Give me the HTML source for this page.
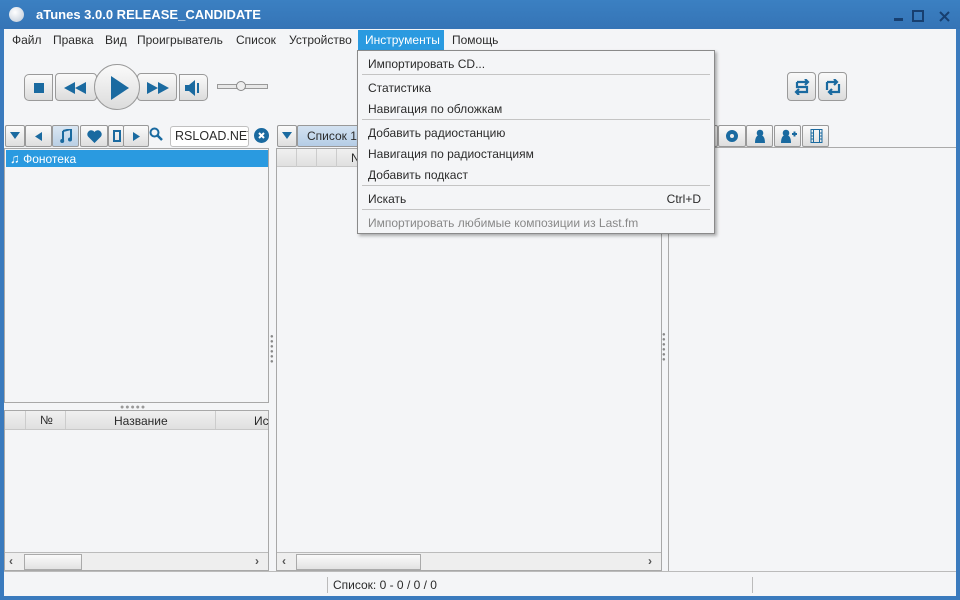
<!DOCTYPE html>
<html><head><meta charset="utf-8"><style>
*{box-sizing:border-box;margin:0;padding:0}
body{width:960px;height:600px;overflow:hidden;background:#3a7abd;font-family:"Liberation Sans","DejaVu Sans",sans-serif;font-size:12px;color:#2b2b2b;position:relative}
.a{position:absolute}
.btn{position:absolute;border:1px solid #9a9a9a;border-radius:4px;background:linear-gradient(#fafafa,#dcdcdc)}
.panel{position:absolute;background:#f4f5f7;border:1px solid #a8a8a8}
.mi{position:absolute;left:10px;font-size:12px}
.sep{position:absolute;left:4px;right:4px;height:1px;background:#c4c4c4}
.tb{position:absolute;top:125px;height:22px;border:1px solid #999;border-radius:2px;background:linear-gradient(#fbfbfb,#dedede)}
svg{display:block}
</style></head><body>
<div class="a" style="left:0;top:0;width:960px;height:29px;background:linear-gradient(#3b80c2,#3574b6)"></div>
<div class="a" style="left:9px;top:7px;width:15px;height:15px;border-radius:50%;background:radial-gradient(circle at 40% 35%,#fff,#bcc8d6)"></div>
<div class="a" style="left:36px;top:7px;color:#fff;font-weight:bold;font-size:13px">aTunes 3.0.0 RELEASE_CANDIDATE</div>
<div class="a" style="left:894px;top:18px;width:9px;height:3px;background:#173f70"></div>
<div class="a" style="left:912px;top:10px;width:12px;height:12px;border:2px solid #173f70"></div>
<svg class="a" style="left:939px;top:11px" width="11" height="11"><path d="M1 1L10 10M10 1L1 10" stroke="#173f70" stroke-width="2"/></svg>
<div class="a" style="left:4px;top:29px;width:952px;height:567px;background:#f4f5f7"></div>
<div class="a" style="left:358px;top:30px;width:86px;height:20px;background:#2a9ae0"></div>
<div class="a" style="top:33px;left:12px">
<span class="a" style="left:0">Файл</span><span class="a" style="left:41px">Правка</span><span class="a" style="left:93px">Вид</span><span class="a" style="left:125px;white-space:nowrap">Проигрыватель</span><span class="a" style="left:224px">Список</span><span class="a" style="left:277px">Устройство</span><span class="a" style="left:353px;color:#fff;white-space:nowrap">Инструменты</span><span class="a" style="left:440px">Помощь</span></div>
<div class="btn" style="left:24px;top:74px;width:29px;height:27px;border-radius:5px 0 0 5px"><div class="a" style="left:9px;top:8px;width:10px;height:10px;background:#1a6aa0"></div></div>
<div class="btn" style="left:55px;top:73px;width:42px;height:28px"><svg class="a" style="left:8px;top:8px" width="24" height="12"><path d="M0 6L11 0V12ZM11 6L22 0V12Z" fill="#1a6aa0"/></svg></div>
<div class="btn" style="left:137px;top:73px;width:40px;height:28px"><svg class="a" style="left:9px;top:8px" width="24" height="12"><path d="M0 0L11 6L0 12ZM11 0L22 6L11 12Z" fill="#1a6aa0"/></svg></div>
<div class="btn" style="left:94px;top:64px;width:46px;height:46px;border-radius:50%"><svg class="a" style="left:15px;top:11px" width="20" height="24"><path d="M1 0L19 12L1 24Z" fill="#1a6aa0"/></svg></div>
<div class="btn" style="left:179px;top:74px;width:29px;height:27px;border-radius:0 5px 5px 0"><svg class="a" style="left:5px;top:5px" width="18" height="16"><path d="M0 5H4L10 0V16L4 11H0Z M12 3h2v10h-2z" fill="#1a6aa0"/></svg></div>
<div class="a" style="left:217px;top:84px;width:51px;height:5px;border:1px solid #999;background:#e8e8e8"></div>
<div class="a" style="left:236px;top:81px;width:10px;height:10px;border-radius:50%;border:1px solid #888;background:#eee"></div>
<div class="btn" style="left:787px;top:72px;width:29px;height:29px"><svg class="a" style="left:6px;top:6px" width="16" height="16"><path d="M3 3H14M11 0L14 3L11 6M3 3V8H13V13H2M5 10L2 13L5 16" stroke="#1a6aa0" stroke-width="2.2" fill="none"/></svg></div>
<div class="btn" style="left:818px;top:72px;width:29px;height:29px"><svg class="a" style="left:6px;top:6px" width="16" height="16"><path d="M2 3H12M9 0L12 3L9 6M14 5V13H4M7 10L4 13L7 16M2 3V11" stroke="#1a6aa0" stroke-width="2.2" fill="none"/></svg></div>
<div class="tb" style="left:5px;width:20px"><svg class="a" style="left:4px;top:6px" width="10" height="8"><path d="M0 0H10L5 7Z" fill="#1a6aa0"/></svg></div>
<div class="tb" style="left:25px;width:27px"><svg class="a" style="left:9px;top:6px" width="8" height="9"><path d="M7 0V9L0 4.5Z" fill="#1a6aa0"/></svg></div>
<div class="tb" style="left:52px;width:27px;background:linear-gradient(#dbe7f3,#b9cfe5)"><svg class="a" style="left:7px;top:3px" width="12" height="14"><path d="M3 2L11 0V10M3 2V12" stroke="#1a6aa0" stroke-width="2" fill="none"/><circle cx="2.2" cy="12" r="2" fill="#1a6aa0"/><circle cx="10" cy="10.5" r="2" fill="#1a6aa0"/></svg></div>
<div class="tb" style="left:80px;width:28px"><svg class="a" style="left:6px;top:4px" width="15" height="13"><path d="M7.5 13L1 6.5A3.6 3.6 0 0 1 7.5 2A3.6 3.6 0 0 1 14 6.5Z" fill="#1a6aa0"/></svg></div>
<div class="tb" style="left:108px;width:16px"><div class="a" style="left:4px;top:4px;width:8px;height:12px;border:2px solid #1a6aa0"></div></div>
<div class="tb" style="left:123px;width:26px"><svg class="a" style="left:9px;top:6px" width="8" height="9"><path d="M0 0V9L7 4.5Z" fill="#1a6aa0"/></svg></div>
<svg class="a" style="left:149px;top:127px" width="14" height="15"><circle cx="5.5" cy="5.5" r="4" stroke="#1a6aa0" stroke-width="2" fill="none"/><path d="M8.5 8.5L13 13" stroke="#1a6aa0" stroke-width="2.5"/></svg>
<div class="a" style="left:170px;top:126px;width:79px;height:21px;border:1px solid #c0c0c0;border-radius:3px;background:#fff;padding:2px 0 0 4px;font-size:12.5px;overflow:hidden;white-space:nowrap">RSLOAD.NET</div>
<div class="a" style="left:254px;top:128px;width:15px;height:15px;border-radius:50%;background:#1a6aa0"><svg class="a" style="left:4px;top:4px" width="7" height="7"><path d="M1 1L6 6M6 1L1 6" stroke="#fff" stroke-width="2"/></svg></div>
<div class="tb" style="left:277px;width:20px"><svg class="a" style="left:4px;top:6px" width="10" height="8"><path d="M0 0H10L5 7Z" fill="#1a6aa0"/></svg></div>
<div class="tb" style="left:297px;width:65px;background:linear-gradient(#d3e2f1,#b5cde6);padding:3px 0 0 9px">Список 1</div>
<div class="tb" style="left:708px;width:10px"></div>
<div class="tb" style="left:718px;width:28px"><div class="a" style="left:7px;top:4px;width:12px;height:12px;border-radius:50%;border:4px solid #1a6aa0"></div></div>
<div class="tb" style="left:746px;width:27px"><svg class="a" style="left:7px;top:3px" width="12" height="14"><circle cx="6" cy="4" r="3.3" fill="#1a6aa0"/><path d="M1 14Q1 6 6 6Q11 6 11 14Z" fill="#1a6aa0"/></svg></div>
<div class="tb" style="left:774px;width:27px"><svg class="a" style="left:6px;top:3px" width="16" height="14"><circle cx="5" cy="4" r="3.3" fill="#1a6aa0"/><path d="M0 14Q0 6 5 6Q10 6 10 14Z M11 4h5v2h-5zM12.5 2.5h2v5h-2z" fill="#1a6aa0"/></svg></div>
<div class="tb" style="left:802px;width:27px"><svg class="a" style="left:7px;top:3px" width="13" height="14"><rect x="1" y="0.5" width="11" height="13" fill="none" stroke="#1a6aa0"/><path d="M3.5 0V14M9.5 0V14M1 4H3.5M1 7H3.5M1 10H3.5M9.5 4H12M9.5 7H12M9.5 10H12" stroke="#1a6aa0"/></svg></div>
<div class="panel" style="left:4px;top:148px;width:265px;height:255px">
<div class="a" style="left:1px;top:1px;width:262px;height:17px;background:#2a9ae0;color:#fff;padding:1px 0 0 4px"><span style="font-size:13px">♫</span> Фонотека</div></div>
<div class="a" style="left:120px;top:404px;color:#999;font-size:7px;letter-spacing:1px">●●●●●</div>
<div class="panel" style="left:4px;top:410px;width:265px;height:161px">
<div class="a" style="left:0;top:0;width:263px;height:19px;background:linear-gradient(#f0f0f0,#e0e0e0);border-bottom:1px solid #c8c8c8">
<div class="a" style="left:20px;top:0;width:1px;height:18px;background:#ccc"></div>
<div class="a" style="left:35px;top:2px">№</div>
<div class="a" style="left:60px;top:0;width:1px;height:18px;background:#ccc"></div>
<div class="a" style="left:109px;top:3px">Название</div>
<div class="a" style="left:210px;top:0;width:1px;height:18px;background:#ccc"></div>
<div class="a" style="left:249px;top:3px">Ис</div></div>
<div class="a" style="left:0;top:141px;width:263px;height:18px;border-top:1px solid #bbb;background:#eee">
<div class="a" style="left:4px;top:1px;font-weight:bold;color:#555">‹</div>
<div class="a" style="left:19px;top:1px;width:58px;height:16px;border:1px solid #aaa;background:linear-gradient(#fafafa,#e2e2e2)"></div>
<div class="a" style="left:250px;top:1px;font-weight:bold;color:#555">›</div></div></div>
<div class="a" style="left:270px;top:335px;color:#888;font-size:6px;line-height:5px;width:4px">●<br>●<br>●<br>●<br>●<br>●</div>
<div class="panel" style="left:276px;top:148px;width:386px;height:423px">
<div class="a" style="left:0;top:0;width:384px;height:18px;background:linear-gradient(#f0f0f0,#e0e0e0);border-bottom:1px solid #c8c8c8">
<div class="a" style="left:19px;top:0;width:1px;height:18px;background:#ccc"></div>
<div class="a" style="left:39px;top:0;width:1px;height:18px;background:#ccc"></div>
<div class="a" style="left:59px;top:0;width:1px;height:18px;background:#ccc"></div>
<div class="a" style="left:74px;top:2px">N</div></div>
<div class="a" style="left:0;top:403px;width:384px;height:18px;border-top:1px solid #bbb;background:#eee">
<div class="a" style="left:5px;top:1px;font-weight:bold;color:#555">‹</div>
<div class="a" style="left:19px;top:1px;width:125px;height:16px;border:1px solid #aaa;background:linear-gradient(#fafafa,#e2e2e2)"></div>
<div class="a" style="left:371px;top:1px;font-weight:bold;color:#555">›</div></div></div>
<div class="a" style="left:662px;top:333px;color:#888;font-size:6px;line-height:5px;width:4px">●<br>●<br>●<br>●<br>●<br>●</div>
<div class="a" style="left:668px;top:147px;width:288px;height:424px;border-left:1px solid #aaa;border-top:1px solid #aaa"></div>
<div class="a" style="left:4px;top:571px;width:952px;height:1px;background:#bbb"></div>
<div class="a" style="left:327px;top:577px;width:1px;height:16px;background:#bbb"></div>
<div class="a" style="left:752px;top:577px;width:1px;height:16px;background:#bbb"></div>
<div class="a" style="left:333px;top:578px">Список: 0 - 0 / 0 / 0</div>
<div class="a" style="left:357px;top:50px;width:358px;height:184px;background:#f4f5f7;border:1px solid #8a8a8a;box-shadow:2px 2px 3px rgba(0,0,0,.3)">
<div class="mi" style="top:6px">Импортировать CD...</div>
<div class="sep" style="top:23px"></div>
<div class="mi" style="top:30px">Статистика</div>
<div class="mi" style="top:51px">Навигация по обложкам</div>
<div class="sep" style="top:68px"></div>
<div class="mi" style="top:75px">Добавить радиостанцию</div>
<div class="mi" style="top:96px">Навигация по радиостанциям</div>
<div class="mi" style="top:117px">Добавить подкаст</div>
<div class="sep" style="top:134px"></div>
<div class="mi" style="top:141px">Искать</div>
<div class="a" style="right:13px;top:141px">Ctrl+D</div>
<div class="sep" style="top:158px"></div>
<div class="mi" style="top:165px;color:#888">Импортировать любимые композиции из Last.fm</div>
</div>
</body></html>
